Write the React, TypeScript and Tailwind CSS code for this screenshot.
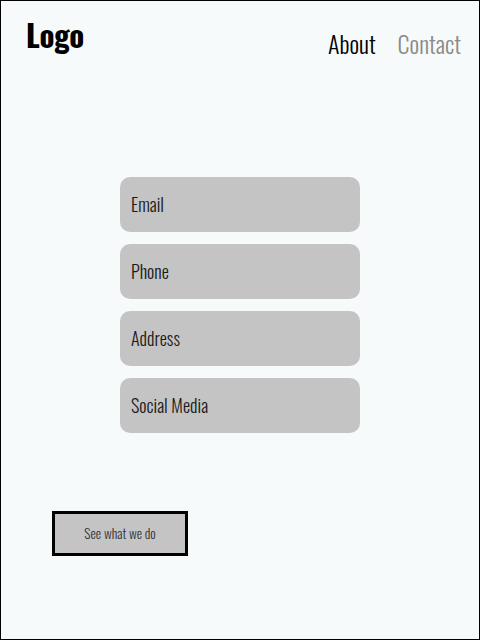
const font = "font-['Oswald','Liberation_Sans_Narrow','DejaVu_Sans_Condensed',sans-serif]";

const fields = ['Email', 'Phone', 'Address', 'Social Media'];

export default function App() {
  return (
    <div className={`w-[480px] h-[640px] border border-black bg-[#f6fafb] flex flex-col ${font}`}>
      {/* Header */}
      <header className="flex items-start justify-between pl-[25px] pr-[18px] pt-[10px] h-[58px]">
        <h1 className="text-[31px] leading-[46px] font-bold text-black tracking-[-0.3px]">Logo</h1>
        <nav className="flex gap-[22px] pt-[15px] text-[24px] leading-[34px] font-light">
          <a className="text-black">About</a>
          <a className="text-[#8a8a8a]">Contact</a>
        </nav>
      </header>

      {/* Contact fields */}
      <div className="flex flex-col gap-3 w-[240px] ml-[119px] mt-[118px]">
        {fields.map((f) => (
          <div
            key={f}
            className="h-[55px] rounded-[10px] bg-[#c4c4c4] flex items-center px-[11px] pb-[1px] text-[18px] font-light text-[#1a1a1a]"
          >
            {f}
          </div>
        ))}
      </div>

      <div className="mt-[78px] ml-[51px]">
        <button className="w-[136px] h-[45px] border-[3px] border-black bg-[#c4c4c4] text-[13.5px] font-light text-[#333]">
          See what we do
        </button>
      </div>
    </div>
  );
}
